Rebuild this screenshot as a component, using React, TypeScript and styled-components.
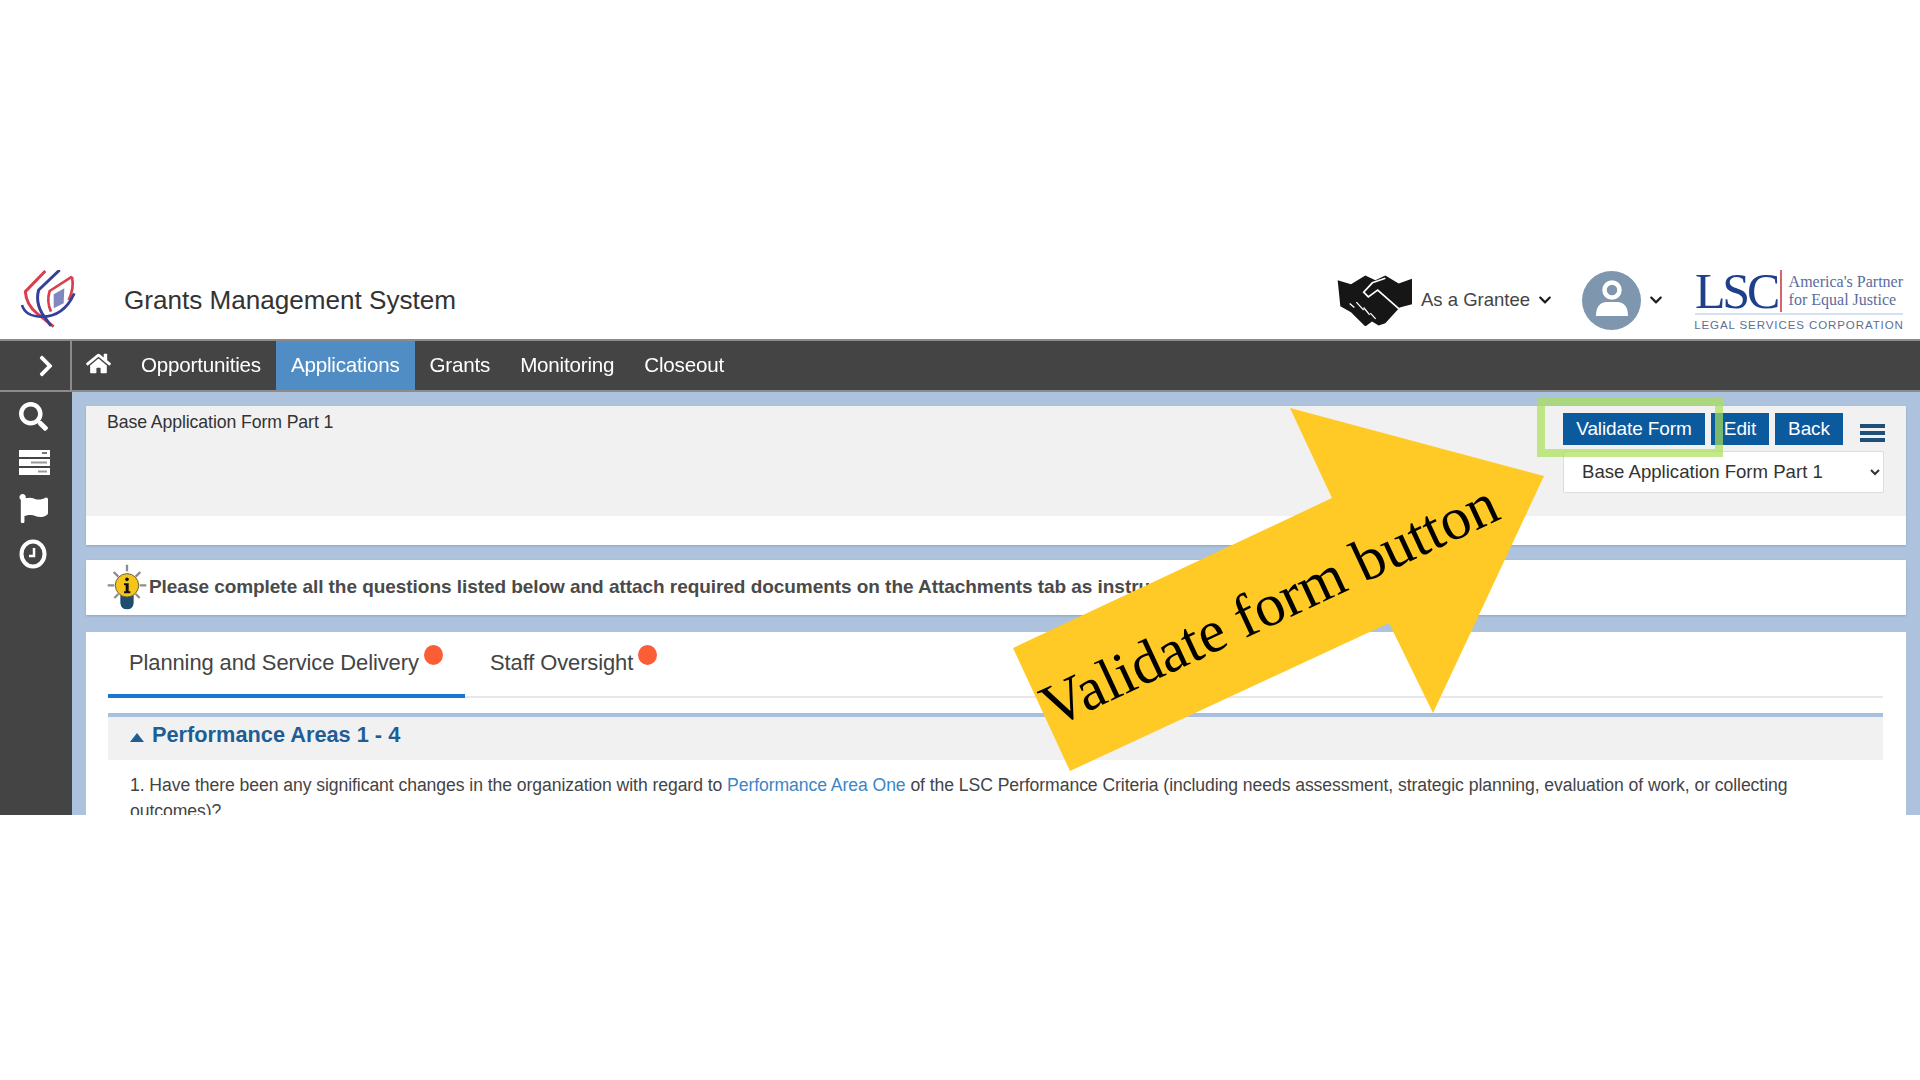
import React from "react";
import styled, { createGlobalStyle } from "styled-components";
import { FaChevronDown, FaChevronRight, FaFlag, FaHome, FaSearch } from "react-icons/fa";

const Global = createGlobalStyle`
  html, body { margin: 0; padding: 0; background: #fff; }
  body { font-family: "Liberation Sans", Arial, sans-serif; }
`;

const Page = styled.div`
  position: relative;
  width: 1920px;
  height: 1080px;
  padding-top: 270px;
  box-sizing: border-box;
  overflow: hidden;
  background: #fff;
`;

const Screen = styled.div`
  height: 545px;
  overflow: hidden;
  display: flex;
  flex-direction: column;
  filter: blur(0.55px);
`;

const Header = styled.header`
  height: 69px;
  flex: none;
  display: flex;
  align-items: center;
  padding: 0 15px 9px 17px;
  box-sizing: border-box;
  background: #fff;
`;

const Title = styled.h1`
  margin: 0 0 0 47px;
  font-size: 26.1px;
  font-weight: 400;
  color: #333;
  flex: 1;
  white-space: nowrap;
`;

const Role = styled.span`
  margin-left: 8px;
  font-size: 18.5px;
  color: #444;
  white-space: nowrap;
`;

const Caret = styled.span`
  display: inline-flex;
  margin-left: 8px;
  color: #1b1b1b;
  font-size: 14px;
`;

const Avatar = styled.span`
  width: 59px;
  height: 59px;
  margin-left: 30px;
  border-radius: 50%;
  background: #7f97ae;
  display: flex;
  align-items: center;
  justify-content: center;
`;

const Lsc = styled.div`
  width: 212px;
  margin-left: 30px;
  display: flex;
  flex-direction: column;
  align-items: center;
`;

const LscTop = styled.div`
  width: 208px;
  height: 42px;
  display: flex;
  align-items: center;
  border-bottom: 2px solid #d6e0ee;
  padding-bottom: 1px;
`;

const LscMark = styled.span`
  width: 87px;
  box-sizing: border-box;
  font-family: "Liberation Serif", serif;
  font-size: 50px;
  line-height: 42px;
  letter-spacing: -3.2px;
  color: #1d3f8c;
  border-right: 2px solid #d9626e;
`;

const LscMotto = styled.span`
  margin-left: 7px;
  font-family: "Liberation Serif", serif;
  font-size: 16px;
  line-height: 18px;
  color: #5b6c9c;
  white-space: nowrap;
`;

const LscName = styled.span`
  margin-top: 4px;
  font-size: 11.5px;
  letter-spacing: 0.92px;
  color: #5c6f92;
  white-space: nowrap;
`;

const NavBar = styled.nav`
  height: 53px;
  flex: none;
  display: flex;
  align-items: stretch;
  background: #444;
  border-top: 2px solid #8b8b8b;
  border-bottom: 2px solid #8b8b8b;
  box-sizing: border-box;
  color: #fff;
`;

const Toggle = styled.span`
  width: 72px;
  flex: none;
  display: flex;
  align-items: center;
  justify-content: flex-end;
  padding-right: 12px;
  box-sizing: border-box;
  border-right: 2px solid #8b8b8b;
  font-size: 24px;
`;

const HomeLink = styled.span`
  width: 40px;
  margin-left: 14px;
  display: flex;
  align-items: center;
  font-size: 25px;
  padding-bottom: 4px;
  box-sizing: border-box;
`;

const NavItem = styled.span<{ $active?: boolean }>`
  display: flex;
  align-items: center;
  padding: 0 15px 2px;
  font-size: 20.6px;
  letter-spacing: -0.2px;
  background: ${(p) => (p.$active ? "#4f8dc4" : "transparent")};
`;

const Body = styled.div`
  flex: 1;
  display: flex;
  min-height: 0;
`;

const Sidebar = styled.aside`
  width: 72px;
  flex: none;
  display: flex;
  flex-direction: column;
  align-items: flex-start;
  padding: 1px 0 0 19px;
  box-sizing: border-box;
  background: #444;
  color: #fff;
`;

const SideIcon = styled.span`
  height: 46px;
  display: flex;
  align-items: center;
  font-size: 29px;
`;

const Content = styled.main`
  flex: 1;
  display: flex;
  flex-direction: column;
  padding: 14px 14px 0;
  gap: 15px;
  background: #adc2dc;
  min-width: 0;
`;

const TitlePanel = styled.section`
  height: 139px;
  flex: none;
  background: #fff;
  box-shadow: 0 1px 2px #8fa6c4;
`;

const TitleBand = styled.div`
  height: 110px;
  display: flex;
  justify-content: space-between;
  padding: 7px 21px 0;
  box-sizing: border-box;
  background: #f1f1f1;
`;

const FormName = styled.span`
  margin-top: -1px;
  font-size: 17.7px;
  line-height: 20px;
  letter-spacing: -0.1px;
  color: #333;
`;

const Actions = styled.div`
  width: 322px;
  display: flex;
  flex-direction: column;
  gap: 6px;
`;

const ButtonRow = styled.div`
  display: flex;
  gap: 6px;
  height: 32px;
  align-items: stretch;
`;

const ActionButton = styled.button<{ $w: number }>`
  width: ${(p) => p.$w}px;
  flex: none;
  padding: 0;
  border: 0;
  background: #0b5a9e;
  color: #fff;
  font-family: inherit;
  font-size: 19px;
  letter-spacing: -0.1px;
`;

const Burger = styled.span`
  width: 25px;
  flex: none;
  margin: 11px 0 0 11px;
  height: 18px;
  display: flex;
  flex-direction: column;
  justify-content: space-between;
`;

const BurgerBar = styled.i`
  display: block;
  height: 4px;
  background: #1f4f78;
`;

const FormSelect = styled.select`
  width: 321px;
  height: 42px;
  padding: 0 0 2px 14px;
  border: 1px solid #dcdcdc;
  border-radius: 2px;
  background: #fff;
  color: #333;
  font-family: inherit;
  font-size: 18.6px;
`;

const Notice = styled.section`
  height: 55px;
  flex: none;
  display: flex;
  align-items: center;
  padding: 0 0 1px 21px;
  box-sizing: border-box;
  gap: 2px;
  background: #fff;
  box-shadow: 0 1px 2px #8fa6c4;
`;

const NoticeText = styled.span`
  font-size: 19px;
  font-weight: 700;
  letter-spacing: -0.05px;
  color: #4a4a4a;
  white-space: nowrap;
`;

const Card = styled.section`
  flex: 1;
  margin-top: 2px;
  padding: 0 23px 0 22px;
  background: #fff;
`;

const Tabs = styled.div`
  height: 66px;
  display: flex;
  border-bottom: 2px solid #e8e8e8;
  box-sizing: border-box;
`;

const Tab = styled.span<{ $active?: boolean; $w: number; $inset: number }>`
  width: ${(p) => p.$w}px;
  height: 66px;
  box-sizing: border-box;
  padding: 13px 0 0 ${(p) => p.$inset}px;
  font-size: 21.95px;
  line-height: 26px;
  letter-spacing: -0.1px;
  color: #444;
  white-space: nowrap;
  border-bottom: ${(p) => (p.$active ? "4px solid #1b76d2" : "0")};
`;

const Dot = styled.i`
  display: inline-block;
  width: 19px;
  height: 20px;
  margin-left: 5px;
  border-radius: 50%;
  background: #fb5d35;
  vertical-align: 5px;
`;

const Accordion = styled.div`
  margin-top: 15px;
  border-top: 4px solid #a9c0dd;
`;

const AccordionHead = styled.div`
  height: 43px;
  display: flex;
  align-items: center;
  gap: 8px;
  padding: 0 0 8px 22px;
  box-sizing: border-box;
  background: #f1f1f1;
  color: #1f5e95;
  font-size: 21.75px;
  font-weight: 700;
`;

const Triangle = styled.i`
  width: 0;
  height: 0;
  margin-top: 5px;
  border-left: 7px solid transparent;
  border-right: 7px solid transparent;
  border-bottom: 9px solid #1f5e95;
`;

const Question = styled.p`
  margin: 0;
  padding: 12px 90px 0 22px;
  font-size: 17.6px;
  line-height: 26px;
  letter-spacing: -0.07px;
  color: #444;
`;

const QuestionLink = styled.a`
  color: #3d86c6;
`;

const Highlight = styled.div`
  position: absolute;
  left: 1537px;
  top: 398px;
  width: 186px;
  height: 59px;
  box-sizing: border-box;
  border: 8px solid rgba(170, 224, 90, 0.7);
`;

const Arrow = styled.svg`
  position: absolute;
  left: 0;
  top: 0;
  width: 1920px;
  height: 1080px;
`;

const ArrowLabel = styled.span`
  position: absolute;
  left: 1057px;
  top: 677px;
  font-family: "Liberation Serif", "Times New Roman", serif;
  font-size: 60px;
  line-height: 1;
  color: #000;
  white-space: nowrap;
  transform: rotate(-25deg);
  transform-origin: 0 100%;
`;

const GmsLogo = () => (
  <svg width="60" height="64" viewBox="50 30 180 190" fill="none" strokeLinejoin="miter">
    <path d="M135 38 L75 100 Q78 140 110 165 L160 205" stroke="#d8404f" strokeWidth="9" />
    <path d="M178 35 L115 95 Q105 130 125 165 L152 203" stroke="#34419a" strokeWidth="9" />
    <path d="M215 55 L148 98 Q138 130 152 160 M215 55 Q222 90 205 125" stroke="#d8404f" strokeWidth="8" />
    <path d="M65 140 Q75 175 125 175 Q190 175 222 105" stroke="#34419a" strokeWidth="8" />
    <path d="M160 108 L192 90 L190 135 L160 150 Z" fill="#8088c0" />
  </svg>
);

const HandshakeIcon = () => (
  <svg width="76" height="52" viewBox="20 28 228 155" fill="none">
    <path d="M22 46 L62 58 L105 32 L135 46 L165 32 L205 56 L245 42 V118 L208 128 L165 175 L145 182 L125 170 L105 185 L62 142 L30 124 Z" fill="#161616" />
    <path d="M165 40 L126 54 L100 82 L114 96 L142 76 L206 132" stroke="#fff" strokeWidth="5" />
    <path d="M58 116 L72 128 M78 112 L100 136 M100 128 L118 150 M120 145 L136 162" stroke="#fff" strokeWidth="4" />
  </svg>
);

const UserIcon = () => (
  <svg width="36" height="40" viewBox="0 0 36 40" fill="none">
    <circle cx="18" cy="10" r="7.5" stroke="#fff" strokeWidth="4.5" />
    <path d="M2 36 Q2 23 12 22 H24 Q34 23 34 36 Z" fill="#fff" />
  </svg>
);

const ServerIcon = () => (
  <svg width="31" height="25" viewBox="0 0 31 25">
    <rect y="0" width="31" height="7" fill="#fff" />
    <rect y="9" width="31" height="7" fill="#fff" />
    <rect y="18" width="31" height="7" fill="#fff" />
    <rect x="23" y="2" width="5" height="2" fill="#777" />
    <rect x="12" y="11.5" width="16" height="2" fill="#999" />
    <rect x="19" y="20.5" width="9" height="2" fill="#999" />
  </svg>
);

const ClockIcon = () => (
  <svg width="28" height="30" viewBox="0 0 28 30" fill="none">
    <ellipse cx="14" cy="15" rx="11.5" ry="12.5" stroke="#fff" strokeWidth="4" />
    <path d="M15 9 V17 H10" stroke="#fff" strokeWidth="2.5" />
  </svg>
);

const BulbIcon = () => (
  <svg width="40" height="46" viewBox="50 28 120 138" fill="none">
    <path d="M110 30 V50 M70 52 L84 66 M150 52 L136 66 M52 92 H72 M148 92 H168 M72 130 L84 118 M148 130 L136 118" stroke="#8d8d8d" strokeWidth="7" />
    <path d="M90 122 H130 V145 Q128 164 110 164 Q92 164 90 145 Z" fill="#1f4d70" />
    <circle cx="110" cy="92" r="35" fill="#f6c51b" stroke="#6d6230" strokeWidth="3" />
    <circle cx="110" cy="74" r="5.5" fill="#111" />
    <path d="M101 86 H115 V110 H120 V116 H101 V110 H106 V92 H101 Z" fill="#111" />
  </svg>
);

export default function App() {
  return (
    <Page>
      <Global />
      <Screen>
        <Header>
          <GmsLogo />
          <Title>Grants Management System</Title>
          <HandshakeIcon />
          <Role>As a Grantee</Role>
          <Caret><FaChevronDown /></Caret>
          <Avatar><UserIcon /></Avatar>
          <Caret><FaChevronDown /></Caret>
          <Lsc>
            <LscTop>
              <LscMark>LSC</LscMark>
              <LscMotto>America's Partner<br />for Equal Justice</LscMotto>
            </LscTop>
            <LscName>LEGAL SERVICES CORPORATION</LscName>
          </Lsc>
        </Header>
        <NavBar>
          <Toggle><FaChevronRight /></Toggle>
          <HomeLink><FaHome /></HomeLink>
          <NavItem>Opportunities</NavItem>
          <NavItem $active>Applications</NavItem>
          <NavItem>Grants</NavItem>
          <NavItem>Monitoring</NavItem>
          <NavItem>Closeout</NavItem>
        </NavBar>
        <Body>
          <Sidebar>
            <SideIcon><FaSearch /></SideIcon>
            <SideIcon><ServerIcon /></SideIcon>
            <SideIcon><FaFlag /></SideIcon>
            <SideIcon><ClockIcon /></SideIcon>
          </Sidebar>
          <Content>
            <TitlePanel>
              <TitleBand>
                <FormName>Base Application Form Part 1</FormName>
                <Actions>
                  <ButtonRow>
                    <ActionButton $w={142}>Validate Form</ActionButton>
                    <ActionButton $w={58}>Edit</ActionButton>
                    <ActionButton $w={68}>Back</ActionButton>
                    <Burger><BurgerBar /><BurgerBar /><BurgerBar /></Burger>
                  </ButtonRow>
                  <FormSelect defaultValue="part1">
                    <option value="part1">Base Application Form Part 1</option>
                  </FormSelect>
                </Actions>
              </TitleBand>
            </TitlePanel>
            <Notice>
              <BulbIcon />
              <NoticeText>Please complete all the questions listed below and attach required documents on the Attachments tab as instructed.</NoticeText>
            </Notice>
            <Card>
              <Tabs>
                <Tab $active $w={357} $inset={21}>Planning and Service Delivery<Dot /></Tab>
                <Tab $w={200} $inset={25}>Staff Oversight<Dot /></Tab>
              </Tabs>
              <Accordion>
                <AccordionHead><Triangle />Performance Areas 1 - 4</AccordionHead>
                <Question>
                  1. Have there been any significant changes in the organization with regard to <QuestionLink>Performance Area One</QuestionLink> of the LSC Performance Criteria (including needs assessment, strategic planning, evaluation of work, or collecting outcomes)?
                </Question>
              </Accordion>
            </Card>
          </Content>
        </Body>
      </Screen>
      <Highlight />
      <Arrow viewBox="0 0 1920 1080">
        <polygon points="1290,408 1544,476 1433,713 1389,623 1070,771 1013,648 1332,498" fill="#ffc926" />
      </Arrow>
      <ArrowLabel>Validate form button</ArrowLabel>
    </Page>
  );
}
